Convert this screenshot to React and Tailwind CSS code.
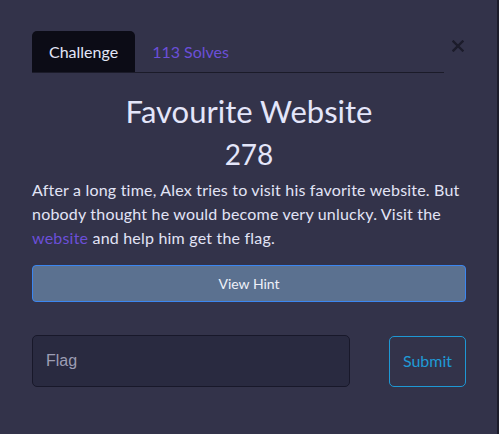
export default function App() {
  return (
    <div
      className="w-[499px] h-[434px] bg-[#33334a] border-r-2 border-[#1d1d2b] overflow-hidden"
      style={{ fontFamily: 'Lato, "Noto Sans", sans-serif' }}
    >
      <div className="pt-[31px] pl-[32px] pr-[31px]">
        {/* tabs + close */}
        <div className="flex items-start">
          <div className="flex flex-1 border-b border-[#1b1b29] items-end">
            <div className="h-[41px] px-[17px] pt-[1px] flex items-center bg-[#0c0c16] rounded-t-[5px] text-[16px] text-[#e3e6f8]">
              Challenge
            </div>
            <div className="h-[41px] px-[17px] pt-[1px] flex items-center text-[16px] text-[#6b4fd8]">
              113 Solves
            </div>
          </div>
          <button className="ml-[6px] mt-[7px] w-[16px] h-[16px] flex items-center justify-center text-[#1c1c2b]">
            <svg width="12" height="12" viewBox="0 0 12 12">
              <path d="M1.5 1.5 L10.5 10.5 M10.5 1.5 L1.5 10.5" stroke="currentColor" strokeWidth="2.4" strokeLinecap="square" />
            </svg>
          </button>
        </div>

        {/* title */}
        <h2 className="mt-[18px] text-center text-[31px] leading-[40px] text-[#e4e6fa]">
          Favourite Website
        </h2>
        <h3 className="mt-[6px] text-center text-[28px] leading-[34px] text-[#e4e6fa]">278</h3>

        <p className="mt-[7px] text-[16px] leading-[24px] tracking-[0.2px] text-[#e2e4f6]">
          After a long time, Alex tries to visit his favorite website. But nobody thought he would become very unlucky. Visit the{' '}
          <a className="text-[#6b4fd8]">website</a> and help him get the flag.
        </p>

        <button className="mt-[15px] w-full h-[37px] rounded-[4px] bg-[#5b7190] border border-[#3b86f0] text-[14px] text-[#eef0f8]">
          View Hint
        </button>

        <div className="mt-[33px] flex items-center justify-between">
          <div
            className="w-[318px] h-[52px] rounded-[5px] bg-[#292a40] border border-[#18182a] flex items-center pl-[13px] text-[16px] text-[#9c9db4]"
            style={{ fontFamily: '"Liberation Sans", Arial, sans-serif' }}
          >
            Flag
          </div>
          <button className="w-[77px] h-[51px] rounded-[5px] border border-[#1e98d4] text-[16px] text-[#1f9ad6]">
            Submit
          </button>
        </div>
      </div>
    </div>
  );
}
